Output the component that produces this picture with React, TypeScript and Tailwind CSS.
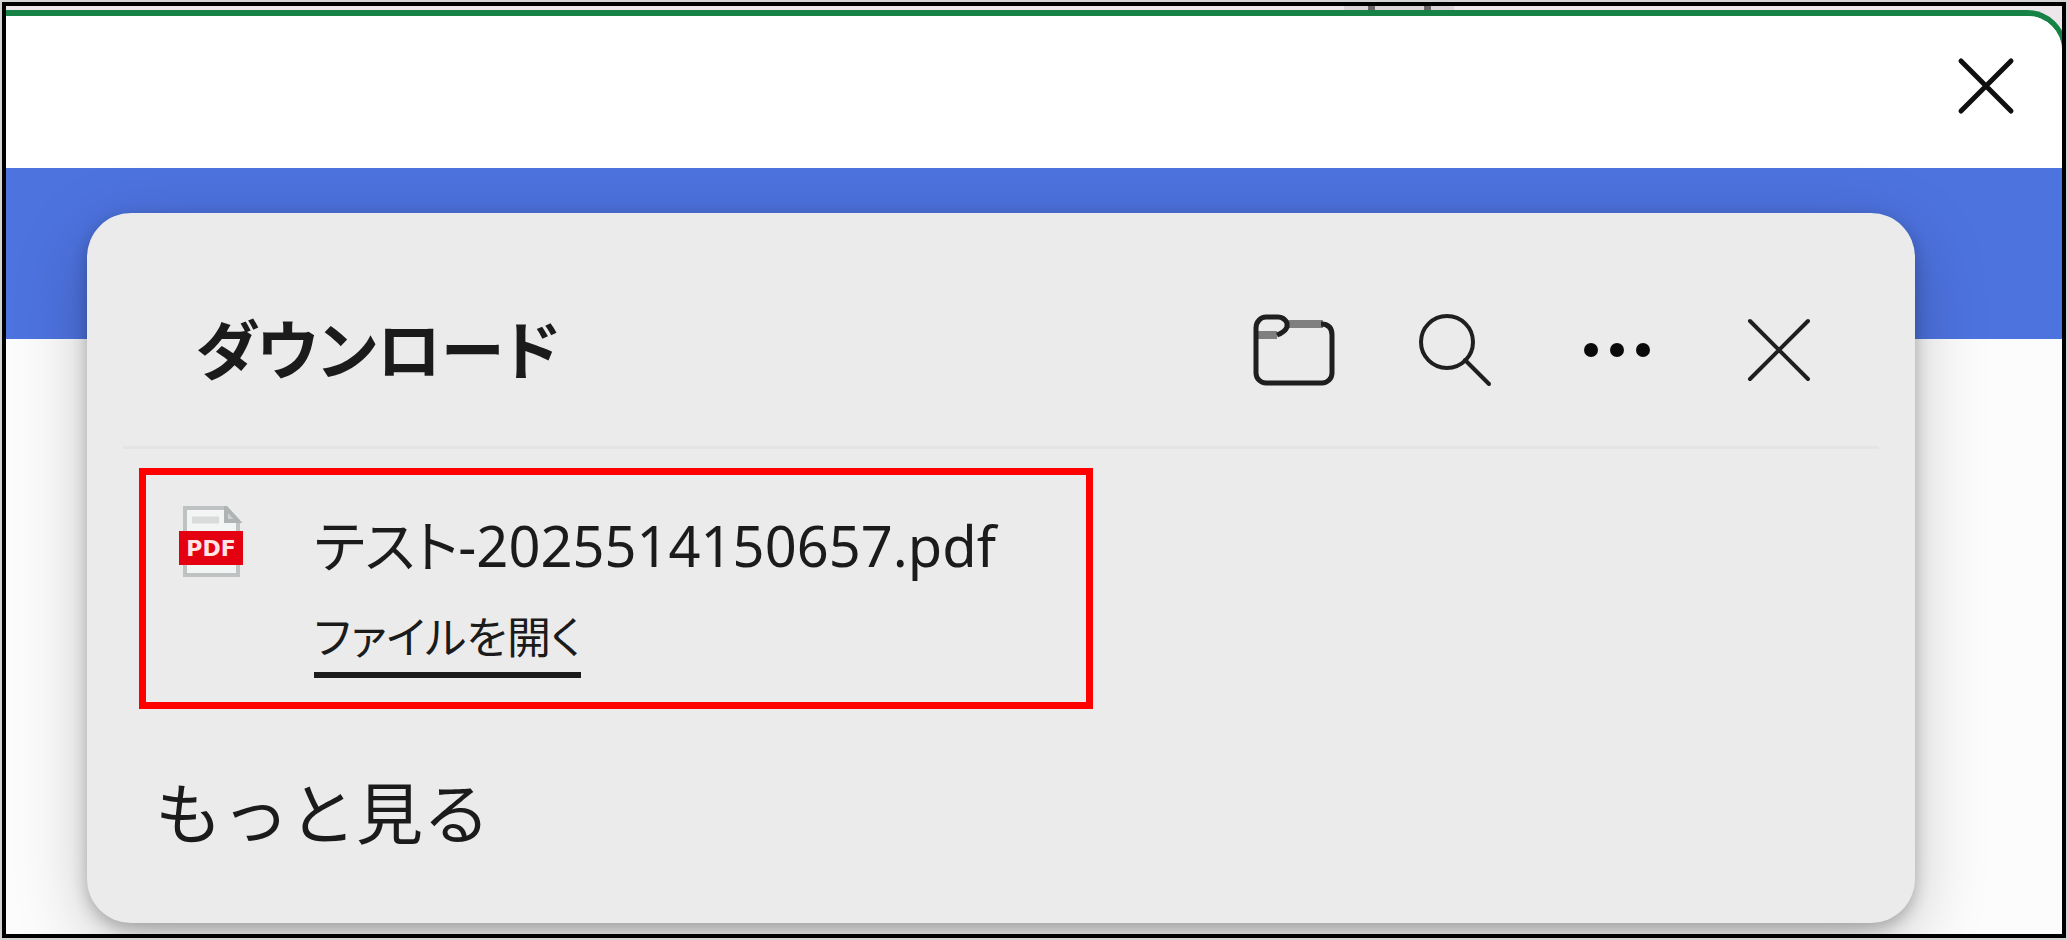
import type { ReactNode } from "react";

interface DownloadItem {
  id: number;
  name: string;
  action: string;
}

const downloads: DownloadItem[] = [
  { id: 1, name: "テスト-2025514150657.pdf", action: "ファイルを開く" },
];

function FolderIcon() {
  return (
    <svg viewBox="0 0 96 96" className="size-24" fill="none" aria-hidden="true">
      <path d="M42 22h36M12 33h20" stroke="#7f7f7f" strokeWidth="8" />
      <path
        d="M11 26a10 11 0 0 1 10-11h12q6 0 9 6v4q-2 5-10 8M76 22q11 0 11 11v38a10 10 0 0 1-10 10H21a10 10 0 0 1-10-10V26"
        stroke="#1f1f1f"
        strokeWidth="5"
        strokeLinejoin="round"
      />
    </svg>
  );
}

function SearchIcon() {
  return (
    <svg viewBox="0 0 96 96" className="size-24" fill="none" aria-hidden="true">
      <circle cx="40" cy="40" r="26" stroke="#1f1f1f" strokeWidth="4" />
      <path d="M58 58l24 24" stroke="#1f1f1f" strokeWidth="4" strokeLinecap="round" />
    </svg>
  );
}

function MoreIcon() {
  return (
    <svg viewBox="0 0 96 96" className="size-24" fill="#0a0a0a" aria-hidden="true">
      <circle cx="22" cy="48" r="7" />
      <circle cx="48" cy="48" r="7" />
      <circle cx="74" cy="48" r="7" />
    </svg>
  );
}

function CloseIcon() {
  return (
    <svg viewBox="0 0 96 96" className="size-24" fill="none" aria-hidden="true">
      <path d="M19 19l58 58M77 19L19 77" stroke="#1f1f1f" strokeWidth="4" strokeLinecap="round" />
    </svg>
  );
}

function PdfIcon() {
  return (
    <svg viewBox="0 0 66 72" className="h-[72px] w-[66px] shrink-0" role="img" aria-label="PDF">
      <path d="M7 2h41l12 13v54H7z" fill="#f3f4f4" stroke="#bfc2c2" strokeWidth="4" />
      <path d="M48 2v13h12z" fill="#d0d2d2" stroke="#b0b3b3" strokeWidth="4" />
      <path d="M14 14h27" stroke="#d9dbdb" strokeWidth="7" />
      <rect x="1" y="25" width="64" height="34" fill="#e50011" />
      <text
        x="33"
        y="50"
        textAnchor="middle"
        fill="#ffe4e6"
        fontFamily="DejaVu Sans, sans-serif"
        fontWeight="700"
        fontSize="22"
      >
        PDF
      </text>
    </svg>
  );
}

function IconButton({ label, children }: { label: string; children: ReactNode }) {
  return (
    <button type="button" aria-label={label} className="size-24 rounded-lg">
      {children}
    </button>
  );
}

function DownloadRow({ item }: { item: DownloadItem }) {
  return (
    <li className="flex items-start gap-[70px] border-7 border-[#ff0000] pt-[31px] pb-6 pl-8">
      <PdfIcon />
      <div className="flex flex-col items-start">
        <span className="text-[56px] leading-[78px] whitespace-nowrap">{item.name}</span>
        <a href="#open" className="mt-[18px] border-b-6 border-[#1b1b1b] text-[44px] leading-[70px]">
          {item.action}
        </a>
      </div>
    </li>
  );
}

export default function App() {
  return (
    <div className="flex min-h-screen bg-[#d4d4d4] p-[2px] font-['Noto_Sans','Noto_Sans_CJK_JP',sans-serif] text-[#1b1b1b]">
      <div className="flex w-full flex-col overflow-hidden border-4 border-black bg-[#ede6ea]">
        {/* Title bar of the window behind */}
        <svg viewBox="0 0 110 4" className="mr-[608px] h-1 w-[110px] self-end" aria-hidden="true">
          <path d="M0 2h110" stroke="#dcd3d8" strokeWidth="4" />
          <path d="M24 2h7M80 2h7" stroke="#6b6568" strokeWidth="4" />
        </svg>

        {/* Browser window */}
        <div className="-mr-[5px] flex grow flex-col overflow-hidden rounded-tr-[40px] border-t-6 border-r-5 border-[#178246] bg-[#fcfcfc]">
          <div className="flex h-[152px] items-center justify-end bg-white pr-7">
            <button type="button" aria-label="ウィンドウを閉じる" className="mb-3 size-24">
              <svg viewBox="0 0 96 96" className="size-24" fill="none" aria-hidden="true">
                <path
                  d="M23 23l50 50M73 23L23 73"
                  stroke="#0f0f0f"
                  strokeWidth="5"
                  strokeLinecap="round"
                />
              </svg>
            </button>
          </div>

          <div className="relative grow">
            <div className="absolute inset-x-0 top-0 h-[171px] bg-[#4d73df]" />

            {/* Downloads flyout */}
            <section className="relative mt-[45px] mr-[147px] mb-[10px] ml-[81px] rounded-[44px] bg-[#ebebeb] px-9 pb-[62px] shadow-[0_20px_72px_rgba(0,0,0,0.22),0_6px_16px_rgba(0,0,0,0.24)] [font-feature-settings:'palt']">
              <header className="flex h-[236px] items-center justify-between border-b-3 border-[#e4e4e4] pt-10 pr-[52px] pl-[72px]">
                <h1 className="text-[64px] leading-[96px] font-bold whitespace-nowrap">
                  ダウンロード
                </h1>
                <div className="flex gap-[66px]">
                  <IconButton label="ダウンロード フォルダーを開く">
                    <FolderIcon />
                  </IconButton>
                  <IconButton label="ダウンロードの検索">
                    <SearchIcon />
                  </IconButton>
                  <IconButton label="その他のオプション">
                    <MoreIcon />
                  </IconButton>
                  <IconButton label="閉じる">
                    <CloseIcon />
                  </IconButton>
                </div>
              </header>

              <ul className="mt-[19px] ml-4 w-[954px] max-w-full">
                {downloads.map((item) => (
                  <DownloadRow key={item.id} item={item} />
                ))}
              </ul>

              <button
                type="button"
                className="mt-14 ml-8 block text-[67px] leading-[96px] [font-feature-settings:normal]"
              >
                もっと見る
              </button>
            </section>
          </div>
        </div>
      </div>
    </div>
  );
}
